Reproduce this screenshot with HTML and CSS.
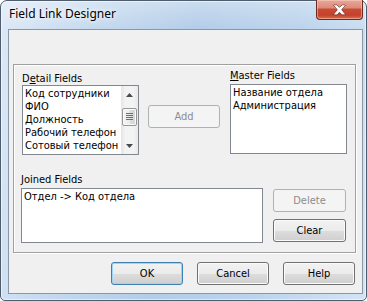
FILE: index.html
```html
<!DOCTYPE html>
<html lang="ru">
<head>
    <meta charset="UTF-8">
    <title>Field Link Designer</title>
    <link rel="stylesheet" href="styles.css">
</head>
<body>

<div class="window">
    <div class="titlebar">
        <span class="caption">Field Link Designer</span>
        <div class="close-btn">
            <svg width="47" height="20" viewBox="0 0 47 20">
                <polygon class="close-x" points="17.5,5 20.8,5 23.5,7.6 26.2,5 29.5,5 25.4,9.8 29.5,14.8 26.2,14.8 23.5,12.1 20.8,14.8 17.5,14.8 21.6,9.8"/>
            </svg>
        </div>
    </div>

    <div class="client">
        <div class="panel">
            <div class="links-row">
                <div class="detail-col">
                    <div class="field-label">D<u>e</u>tail Fields</div>
                    <div class="listbox detail-list">
                        <ul class="items">
                            <li>Код сотрудники</li>
                            <li>ФИО</li>
                            <li>Должность</li>
                            <li>Рабочий телефон</li>
                            <li>Сотовый телефон</li>
                        </ul>
                        <div class="vscroll">
                            <div class="sb-arrow">
                                <svg width="7" height="4" viewBox="0 0 7 4"><polygon points="3.5,0 7,4 0,4" fill="#4a4a4a"/></svg>
                            </div>
                            <div class="sb-track">
                                <div class="sb-thumb">
                                    <svg width="7" height="8" viewBox="0 0 7 8">
                                        <rect x="0" y="0" width="7" height="1" fill="#6f6f6f"/>
                                        <rect x="0" y="2" width="7" height="1" fill="#6f6f6f"/>
                                        <rect x="0" y="4" width="7" height="1" fill="#6f6f6f"/>
                                        <rect x="0" y="6" width="7" height="1" fill="#6f6f6f"/>
                                    </svg>
                                </div>
                            </div>
                            <div class="sb-arrow">
                                <svg width="7" height="4" viewBox="0 0 7 4"><polygon points="0,0 7,0 3.5,4" fill="#4a4a4a"/></svg>
                            </div>
                        </div>
                    </div>
                </div>

                <button class="btn add-btn" disabled>Add</button>

                <div class="master-col">
                    <div class="field-label"><u>M</u>aster Fields</div>
                    <div class="listbox master-list">
                        <ul class="items">
                            <li>Название отдела</li>
                            <li>Администрация</li>
                        </ul>
                    </div>
                </div>
            </div>

            <div class="joined-row">
                <div class="joined-col">
                    <div class="field-label"><u>J</u>oined Fields</div>
                    <div class="listbox joined-list">
                        <ul class="items">
                            <li>Отдел -&gt; Код отдела</li>
                        </ul>
                    </div>
                </div>
                <div class="side-btns">
                    <button class="btn" disabled>Delete</button>
                    <button class="btn">Clear</button>
                </div>
            </div>
        </div>

        <div class="footer">
            <button class="btn default">OK</button>
            <button class="btn">Cancel</button>
            <button class="btn">Help</button>
        </div>
    </div>
</div>

</body>
</html>
```

FILE: styles.css
```css
body {
    margin: 0;
    background: #ffffff;
    font-family: "DejaVu Sans Condensed", "DejaVu Sans", sans-serif;
    font-size: 11px;
    line-height: 13px;
    color: #000;
}

/* window frame */
.window {
    width: 367px;
    height: 301px;
    box-sizing: border-box;
    border: 1px solid #4e5c6d;
    border-radius: 7px 7px 5px 5px;
    padding: 0 3px 6px 7px;
    display: flex;
    flex-direction: column;
    background:
        linear-gradient(to bottom, rgba(255, 255, 255, 0.3), rgba(255, 255, 255, 0) 28px),
        linear-gradient(100deg, #dde9f6 0%, #c6daef 22%, #b3cde8 48%, #bbd3ec 72%, #d4e4f4 100%);
    box-shadow: inset 0 0 0 1px rgba(255, 255, 255, 0.55);
}

.titlebar {
    height: 28px;
    display: flex;
    align-items: flex-start;
}

.caption {
    font-family: "Noto Sans", "Open Sans", sans-serif;
    font-size: 12px;
    line-height: 16px;
    padding: 5px 0 0 1px;
    color: #000;
    text-shadow: 0 0 5px #fff, 0 0 8px rgba(255, 255, 255, 0.9);
}

.close-btn {
    margin-left: auto;
    margin-top: -1px;
    width: 47px;
    height: 20px;
    box-sizing: border-box;
    border: 1px solid #6a2b22;
    border-top: none;
    border-radius: 0 0 4px 4px;
    background: linear-gradient(to bottom, #e9a899 0%, #dc8c7b 40%, #c84a35 50%, #c5412b 80%, #d8714f 100%);
    box-shadow: inset 0 0 0 1px rgba(255, 220, 210, 0.45);
    display: flex;
}

.close-x {
    fill: #ffffff;
    stroke: #4d1a12;
    stroke-width: 1;
    paint-order: stroke;
}

/* client area */
.client {
    flex: 1;
    border: 1px solid #8a97a6;
    background: #f0f0f0;
    display: flex;
    flex-direction: column;
}

.panel {
    margin: 34px 0 0 4px;
    width: 343px;
    height: 189px;
    box-sizing: border-box;
    border: 1px solid #a0a0a0;
    box-shadow: 1px 1px 0 #ffffff, inset 1px 1px 0 #ffffff;
}

.links-row {
    display: flex;
    align-items: flex-start;
    padding-left: 8px;
}

.detail-col {
    width: 117px;
    margin-top: 7px;
}

.field-label {
    height: 13px;
    white-space: nowrap;
}

.add-btn {
    margin-left: 9px;
    margin-top: 40px;
    width: 73px;
}

.master-col {
    margin-left: 10px;
    margin-top: 4px;
}

.master-col .listbox {
    margin-top: 2px;
}

.joined-row {
    display: flex;
    align-items: flex-start;
    padding-left: 7px;
    margin-top: 18px;
}

.joined-col .listbox {
    margin-top: 2px;
}

.side-btns {
    margin-left: 10px;
    margin-top: 16px;
    display: flex;
    flex-direction: column;
    gap: 7px;
}

.side-btns .btn {
    width: 73px;
}

/* list boxes */
.listbox {
    box-sizing: border-box;
    border: 1px solid #828790;
    background: #ffffff;
    display: flex;
    overflow: hidden;
}

.detail-list { width: 117px; height: 70px; }
.master-list { width: 117px; height: 70px; }
.joined-list { width: 242px; height: 55px; }

.items {
    list-style: none;
    margin: 0;
    padding: 1px 2px;
    flex: 1;
}

.items li {
    white-space: nowrap;
    line-height: 13px;
}

/* scroll bar */
.vscroll {
    width: 17px;
    display: flex;
    flex-direction: column;
    background: linear-gradient(to right, #e4e4e4 0%, #f3f3f3 25%, #f3f3f3 75%, #e9e9e9 100%);
}

.sb-arrow {
    height: 17px;
    display: flex;
    align-items: center;
    justify-content: center;
}

.sb-track {
    flex: 1;
    padding-top: 5px;
}

.sb-thumb {
    height: 18px;
    margin: 0 1px;
    box-sizing: border-box;
    border: 1px solid #979797;
    border-radius: 2px;
    background: linear-gradient(to right, #f5f5f5 0%, #ebebeb 50%, #dcdcdc 51%, #d6d6d6 100%);
    box-shadow: inset 0 0 0 1px #fbfbfb;
    display: flex;
    align-items: center;
    justify-content: center;
}

/* buttons */
.btn {
    width: 72px;
    height: 23px;
    box-sizing: border-box;
    padding: 0;
    border: 1px solid #707070;
    border-radius: 3px;
    background: linear-gradient(to bottom, #f2f2f2 0%, #ebebeb 50%, #dddddd 51%, #cfcfcf 100%);
    box-shadow: inset 0 0 0 1px #fbfbfb;
    font-family: inherit;
    font-size: 11px;
    color: #000;
}

.btn:disabled {
    border-color: #adb2b5;
    background: #f4f4f4;
    box-shadow: none;
    color: #8d8d8d;
}

.btn.default {
    border-color: #3c7fb1;
    box-shadow: inset 0 0 0 1px #9fd5f4;
}

.footer {
    margin-top: 9px;
    display: flex;
    justify-content: flex-end;
    gap: 14px;
    padding-right: 7px;
}
```
